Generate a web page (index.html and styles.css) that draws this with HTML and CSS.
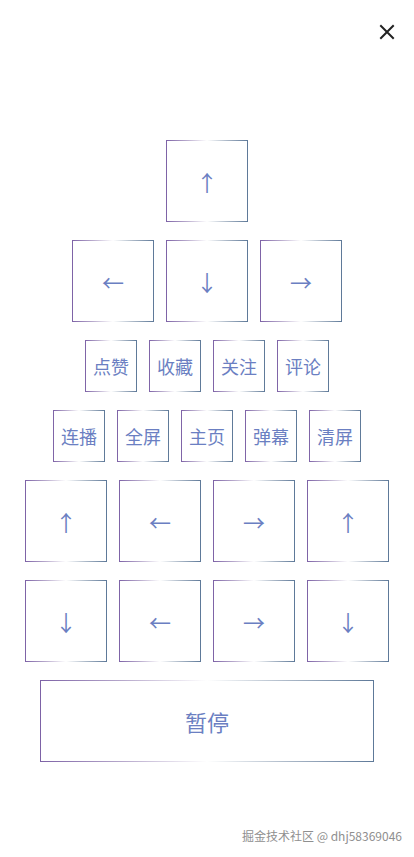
FILE: index.html
```html
<!DOCTYPE html>
<html lang="zh">
<head>
<meta charset="utf-8">
<meta name="viewport" content="width=device-width, initial-scale=1">
<title>遥控器</title>
<link rel="stylesheet" href="styles.css">
</head>
<body>
<div class="page">
  <header class="header">
    <button class="close" aria-label="关闭">
      <svg width="16" height="16" viewBox="0 0 16 16"><path d="M2 2L14 14M14 2L2 14" stroke="#222" stroke-width="2" stroke-linecap="square" fill="none"/></svg>
    </button>
  </header>
  <main class="pad">
    <div class="row">
      <div class="key big arrow">↑</div>
    </div>
    <div class="row">
      <div class="key big arrow">←</div>
      <div class="key big arrow">↓</div>
      <div class="key big arrow">→</div>
    </div>
    <div class="row">
      <div class="key small">点赞</div>
      <div class="key small">收藏</div>
      <div class="key small">关注</div>
      <div class="key small">评论</div>
    </div>
    <div class="row">
      <div class="key small">连播</div>
      <div class="key small">全屏</div>
      <div class="key small">主页</div>
      <div class="key small">弹幕</div>
      <div class="key small">清屏</div>
    </div>
    <div class="row">
      <div class="key big arrow">↑</div>
      <div class="key big arrow">←</div>
      <div class="key big arrow">→</div>
      <div class="key big arrow">↑</div>
    </div>
    <div class="row">
      <div class="key big arrow">↓</div>
      <div class="key big arrow">←</div>
      <div class="key big arrow">→</div>
      <div class="key big arrow">↓</div>
    </div>
    <div class="row">
      <div class="key wide">暂停</div>
    </div>
  </main>
  <div class="watermark">掘金技术社区 @ dhj58369046</div>
  <div class="corner-mark">
    <svg width="22" height="10" viewBox="0 0 22 10"><path d="M2 1L8 7M8 1L2 7M11 4L14 7L20 1" stroke="#ccc" stroke-width="1.4" fill="none"/></svg>
  </div>
</div>
</body>
</html>
```
FILE: styles.css
```css
html, body {
  margin: 0;
  padding: 0;
  background: #fff;
}
body {
  font-family: "Noto Sans CJK SC", "Noto Sans", sans-serif;
}
.page {
  position: relative;
  width: 414px;
  height: 857px;
  overflow: hidden;
}
.header {
  display: flex;
  justify-content: flex-end;
  height: 64px;
  padding-right: 19px;
  align-items: center;
}
.close {
  border: 0;
  background: none;
  padding: 0;
  width: 16px;
  height: 16px;
  display: flex;
  cursor: pointer;
}
.pad {
  display: flex;
  flex-direction: column;
  align-items: center;
  gap: 18px;
  margin-top: 76px;
}
.row {
  display: flex;
  gap: 12px;
  justify-content: center;
}
.key {
  box-sizing: border-box;
  display: flex;
  align-items: center;
  justify-content: center;
  border: 1px solid;
  border-image: linear-gradient(90deg, #7d62a6 0%, #b7a9cc 25%, #ffffff 50%, #a9b6c6 75%, #5d7898 100%) 1;
  color: #6b7fc2;
  line-height: 1;
}
.big {
  width: 82px;
  height: 82px;
}
.arrow {
  font-size: 22px;
}
.small {
  width: 52px;
  height: 52px;
  font-size: 18px;
}
.wide {
  width: 334px;
  height: 82px;
  font-size: 22px;
}
.watermark {
  position: absolute;
  right: 12px;
  top: 827px;
  font-size: 12px;
  color: #8f8f8f;
  font-family: "Noto Sans CJK SC", "Noto Sans", sans-serif;
  line-height: 18px;
}
.corner-mark {
  position: absolute;
  left: 6px;
  bottom: 0;
  height: 8px;
  overflow: hidden;
}
```
